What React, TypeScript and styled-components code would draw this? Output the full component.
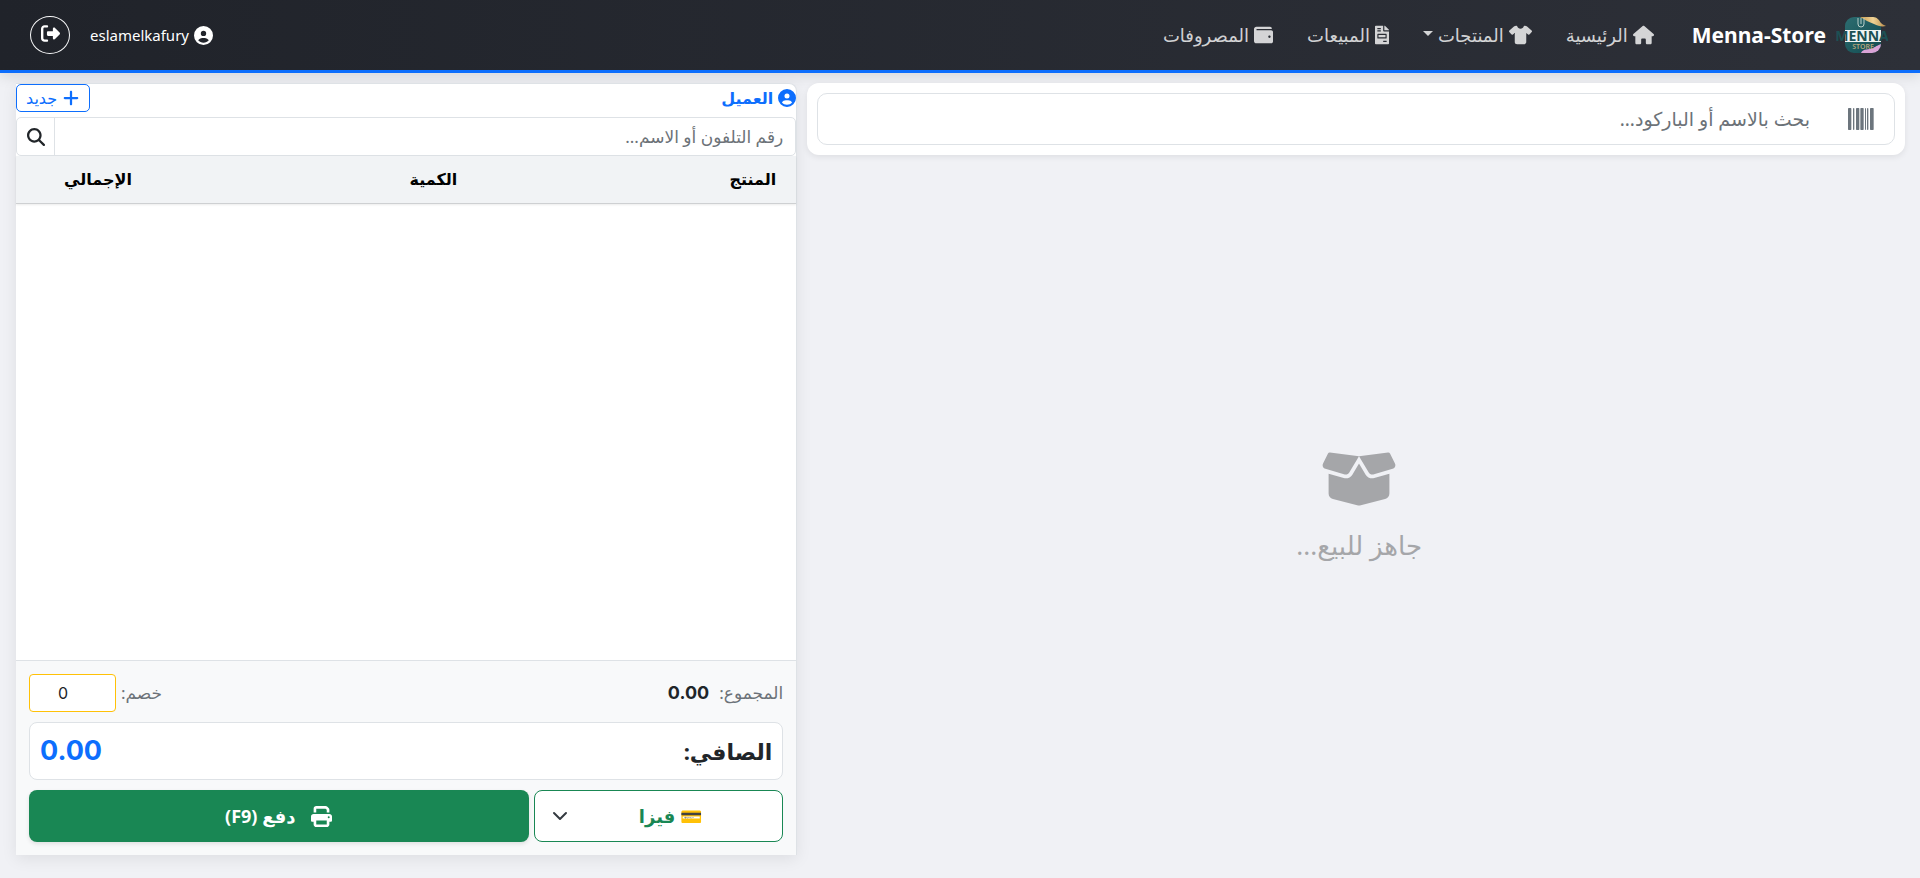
import React from "react";
import styled, { createGlobalStyle, css } from "styled-components";
import {
  FaHouse, FaShirt, FaCircleUser, FaRightFromBracket,
  FaPlus, FaMagnifyingGlass, FaBoxOpen, FaPrint,
} from "react-icons/fa6";
import { FaFileInvoice, FaWallet } from "react-icons/fa";

const textFont = `"Noto Sans", "DejaVu Sans", sans-serif`;
const numberFont = `Inter, "Noto Sans", sans-serif`;

const GlobalStyle = createGlobalStyle`
  *, *::before, *::after { box-sizing: border-box; }
  body {
    margin: 0;
    background: #f0f1f5;
    color: #212529;
    font-family: ${textFont};
    font-size: 16px;
    line-height: 24px;
  }
  button, input, select { font: inherit; color: inherit; margin: 0; }
`;

const Page = styled.div`
  min-height: 100vh;
  display: flex;
  flex-direction: column;
`;

const Navbar = styled.header`
  display: flex;
  align-items: center;
  height: 73px;
  padding: 0 32px 0 30px;
  background: linear-gradient(90deg, #20232a 0%, #2d3038 100%);
  border-bottom: 3px solid #0d6efd;
  box-shadow: 0 4px 12px rgba(0, 0, 0, 0.1);
  color: #fff;
`;

const Brand = styled.a`
  display: flex;
  align-items: center;
  gap: 10px;
  color: #fff;
  font-size: 21px;
  font-weight: 700;
  text-decoration: none;
`;

const Nav = styled.nav`
  display: flex;
  gap: 34px;
  flex: 1;
  padding-inline-start: 38px;
`;

const NavLink = styled.a<{ $icon: number }>`
  display: flex;
  align-items: center;
  gap: 5px;
  color: rgba(255, 255, 255, 0.8);
  font-size: 18px;
  text-decoration: none;
  svg { flex: none; width: ${(p) => p.$icon}px; height: 24px; }
`;

const Caret = styled.span`
  border: 5px solid transparent;
  border-top-color: currentColor;
  border-bottom: 0;
  margin-bottom: 4px;
`;

const Account = styled.div`
  display: flex;
  align-items: center;
  gap: 20px;
  font-size: 15px;
`;

const User = styled.span`
  display: flex;
  align-items: center;
  gap: 5px;
  svg { font-size: 19px; }
`;

const Logout = styled.button`
  display: grid;
  place-items: center;
  width: 40px;
  height: 38px;
  padding: 0 0 3px;
  border: 1px solid #f8f9fa;
  border-radius: 50%;
  background: none;
  color: #fff;
  font-size: 19px;
`;

const Main = styled.main`
  display: flex;
  flex: 1;
  padding: 10px 10px 23px 11px;
`;

const Column = styled.section<{ $share: number }>`
  display: flex;
  flex-direction: column;
  width: calc(100% * ${(p) => p.$share} / 12);
  padding: 0 5px;
`;

const SearchCard = styled.div`
  padding: 10px;
  border-radius: 12px;
  background: #fff;
  box-shadow: 0 2px 6px rgba(0, 0, 0, 0.08);
`;

const SearchBox = styled.label`
  display: flex;
  align-items: center;
  gap: 26px;
  height: 52px;
  padding: 0 20px;
  border: 1px solid #dee2e6;
  border-radius: 10px;
  svg { flex: none; width: 26px; height: 22px; fill: #6c757d; }
`;

const TextInput = styled.input<{ $size: number }>`
  flex: 1;
  min-width: 0;
  padding: 0 12px;
  border: 0;
  outline: 0;
  background: none;
  font-size: ${(p) => p.$size}px;
  &::placeholder { color: #6c7278; opacity: 1; }
`;

const Empty = styled.div`
  display: flex;
  flex: 1;
  flex-direction: column;
  align-items: center;
  justify-content: center;
  gap: 12px;
  padding: 0 0 8px 6px;
  color: #a5a6a9;
  font-size: 26px;
  line-height: 32px;
  svg { width: 76px; height: 76px; }
`;

const Panel = styled.div`
  display: flex;
  flex: 1;
  flex-direction: column;
  background: #fff;
  border: solid #dee2e6;
  border-width: 1px 1px 0 0;
  border-top-right-radius: 8px;
  box-shadow: 0 4px 16px rgba(0, 0, 0, 0.08);
`;

const CustomerBar = styled.div`
  display: flex;
  justify-content: space-between;
  margin-bottom: 5px;
`;

const CustomerTitle = styled.h2`
  display: flex;
  align-items: center;
  gap: 5px;
  margin: 0;
  color: #0d6efd;
  font-size: 16px;
  line-height: 28px;
  svg { font-size: 18px; }
`;

const NewButton = styled.button`
  display: flex;
  align-items: center;
  gap: 5px;
  height: 28px;
  padding: 0 9px;
  border: 1px solid #0d6efd;
  border-radius: 5px;
  background: #fff;
  color: #0d6efd;
  font-size: 16px;
  svg { font-size: 18px; }
`;

const CustomerSearch = styled.div`
  display: flex;
  height: 39px;
  border: 1px solid #dee2e6;
  border-radius: 5px;
`;

const IconButton = styled.button`
  display: grid;
  place-items: center;
  width: 38px;
  padding: 0;
  border: 0;
  border-inline-start: 1px solid #dee2e6;
  background: none;
  font-size: 18px;
`;

const Cart = styled.table`
  width: 100%;
  border-collapse: collapse;
  table-layout: fixed;
  box-shadow: 0 1px 2px rgba(0, 0, 0, 0.08);
`;

const HeadCell = styled.th<{ $width: number; $start?: boolean }>`
  width: ${(p) => p.$width}%;
  height: 47px;
  padding: 0 20px;
  background: #f1f3f5;
  border-bottom: 1px solid #ced0d2;
  color: #000;
  font-size: 16px;
  text-align: ${(p) => (p.$start ? "start" : "center")};
`;

const Summary = styled.div`
  display: flex;
  flex-direction: column;
  gap: 10px;
  margin-top: auto;
  padding: 13px;
  border-top: 1px solid #dee2e6;
  background: #f8f9fa;
`;

const SummaryRow = styled.div`
  display: flex;
  align-items: center;
  justify-content: space-between;
`;

const Labelled = styled.label<{ $gap: number }>`
  display: flex;
  align-items: center;
  gap: ${(p) => p.$gap}px;
  color: #6c7278;
  font-size: 17px;
`;

const Subtotal = styled.strong`
  color: #212529;
  font-family: ${numberFont};
  font-size: 18px;
`;

const DiscountInput = styled.input`
  width: 87px;
  height: 38px;
  padding: 0 12px 0 8px;
  border: 1px solid #ffc107;
  border-radius: 4px;
  background: #fff;
  color: #212529;
  direction: ltr;
  font-family: ${numberFont};
  font-size: 16px;
  text-align: center;
`;

const NetBox = styled.div`
  display: flex;
  align-items: center;
  justify-content: space-between;
  height: 58px;
  padding: 0 10px;
  border: 1px solid #dee2e6;
  border-radius: 8px;
  background: #fff;
  font-size: 22px;
  font-weight: 700;
`;

const NetAmount = styled.span`
  color: #0d6efd;
  font-family: ${numberFont};
  font-size: 27px;
`;

const Actions = styled.div`
  display: flex;
  gap: 5px;
`;

const control = css`
  height: 52px;
  border-radius: 8px;
  font-size: 18px;
  font-weight: 700;
`;

const MethodField = styled.div`
  position: relative;
  flex: 1 1 0;
  min-width: 0;
`;

const MethodSelect = styled.select`
  ${control}
  width: 100%;
  padding: 0 12px 0 36px;
  border: 1px solid #198754;
  background: #fff;
  color: #198754;
  appearance: none;
  text-align: center;
  text-align-last: center;
`;

const Chevron = styled.svg`
  position: absolute;
  left: 18px;
  top: 18px;
  width: 16px;
  height: 16px;
  pointer-events: none;
`;

const PayButton = styled.button`
  ${control}
  display: flex;
  flex: 2 1 0;
  align-items: center;
  justify-content: center;
  gap: 16px;
  padding: 0;
  border: 0;
  background: #198754;
  box-shadow: 0 2px 4px rgba(0, 0, 0, 0.1);
  color: #fff;
  svg { font-size: 21px; }
`;

const LogoSvg = styled.svg`
  width: 52px;
  height: 40px;
`;

function Logo() {
  return (
    <LogoSvg viewBox="0 0 52 40" aria-hidden="true">
      <defs>
        <clipPath id="tile"><rect x="9" y="2" width="36" height="36" rx="9" /></clipPath>
        <linearGradient id="teal" x1="0" y1="0" x2="1" y2="1">
          <stop offset="0" stopColor="#2c6d70" />
          <stop offset="1" stopColor="#124a50" />
        </linearGradient>
        <linearGradient id="gold" x1="0" y1="0" x2="1" y2="0">
          <stop offset="0" stopColor="#c79a50" />
          <stop offset="0.5" stopColor="#f0d294" />
          <stop offset="1" stopColor="#b98d4a" />
        </linearGradient>
      </defs>
      <g clipPath="url(#tile)">
        <rect x="9" y="2" width="36" height="36" fill="url(#teal)" />
        <rect x="9" y="15" width="36" height="12" fill="#f0f4f3" />
        <path d="M25 38c2-5 8-3 12-5s5-3 8-4v9z" fill="#d9a3d6" />
      </g>
      <path d="M24 2h13c4 0 6 3 8 6 2 2 4 2 5 3-4 1-8 0-12-2-5-2-9-4-14-7z" fill="url(#gold)" />
      <path d="M22 3v6q0 3 3 3t3-3V3M25 3v6" fill="none" stroke="#b9cfca" strokeWidth="1" />
      <text x="26" y="26" textAnchor="middle" fontSize="14" fill="#1d5054">MENNA</text>
      <text x="27" y="34" textAnchor="middle" fontSize="7" fontWeight="600" fill="#b7a77c">STORE</text>
    </LogoSvg>
  );
}

const bars = [[0, 10], [15, 4], [24, 10], [37, 10], [51, 3], [57, 4], [66, 11]];

function Barcode() {
  return (
    <svg viewBox="0 0 78 66" aria-hidden="true">
      {bars.map(([x, width]) => (
        <rect key={x} x={x} width={width} height="66" rx="2" />
      ))}
    </svg>
  );
}

export default function App() {
  return (
    <Page dir="rtl" lang="ar">
      <GlobalStyle />
      <Navbar>
        <Brand href="#"><Logo />Menna-Store</Brand>
        <Nav>
          <NavLink href="#" $icon={21}><FaHouse />الرئيسية</NavLink>
          <NavLink href="#" $icon={23}><FaShirt />المنتجات<Caret /></NavLink>
          <NavLink href="#" $icon={14}><FaFileInvoice />المبيعات</NavLink>
          <NavLink href="#" $icon={19}><FaWallet />المصروفات</NavLink>
        </Nav>
        <Account>
          <User><FaCircleUser />eslamelkafury</User>
          <Logout aria-label="تسجيل الخروج"><FaRightFromBracket /></Logout>
        </Account>
      </Navbar>
      <Main>
        <Column $share={7}>
          <SearchCard>
            <SearchBox>
              <Barcode />
              <TextInput $size={19} placeholder="بحث بالاسم أو الباركود..." />
            </SearchBox>
          </SearchCard>
          <Empty><FaBoxOpen />جاهز للبيع...</Empty>
        </Column>
        <Column $share={5}>
          <Panel>
            <CustomerBar>
              <CustomerTitle><FaCircleUser />العميل</CustomerTitle>
              <NewButton><FaPlus />جديد</NewButton>
            </CustomerBar>
            <CustomerSearch>
              <TextInput $size={17} aria-label="العميل" placeholder="رقم التلفون أو الاسم..." />
              <IconButton aria-label="بحث"><FaMagnifyingGlass /></IconButton>
            </CustomerSearch>
            <Cart>
              <thead>
                <tr>
                  <HeadCell $width={14} $start>المنتج</HeadCell>
                  <HeadCell $width={65}>الكمية</HeadCell>
                  <HeadCell $width={21}>الإجمالي</HeadCell>
                </tr>
              </thead>
              <tbody />
            </Cart>
            <Summary>
              <SummaryRow>
                <Labelled as="div" $gap={10}>المجموع:<Subtotal>0.00</Subtotal></Labelled>
                <Labelled $gap={5}>خصم:<DiscountInput type="number" defaultValue="0" /></Labelled>
              </SummaryRow>
              <NetBox>الصافي:<NetAmount>0.00</NetAmount></NetBox>
              <Actions>
                <MethodField>
                  <MethodSelect aria-label="طريقة الدفع" defaultValue="visa">
                    <option value="visa">💳 فيزا</option>
                  </MethodSelect>
                  <Chevron viewBox="0 0 16 16" aria-hidden="true">
                    <path d="m2 5 6 6 6-6" fill="none" stroke="#343a40" strokeWidth="2" strokeLinecap="round" strokeLinejoin="round" />
                  </Chevron>
                </MethodField>
                <PayButton><FaPrint />دفع (F9)</PayButton>
              </Actions>
            </Summary>
          </Panel>
        </Column>
      </Main>
    </Page>
  );
}
